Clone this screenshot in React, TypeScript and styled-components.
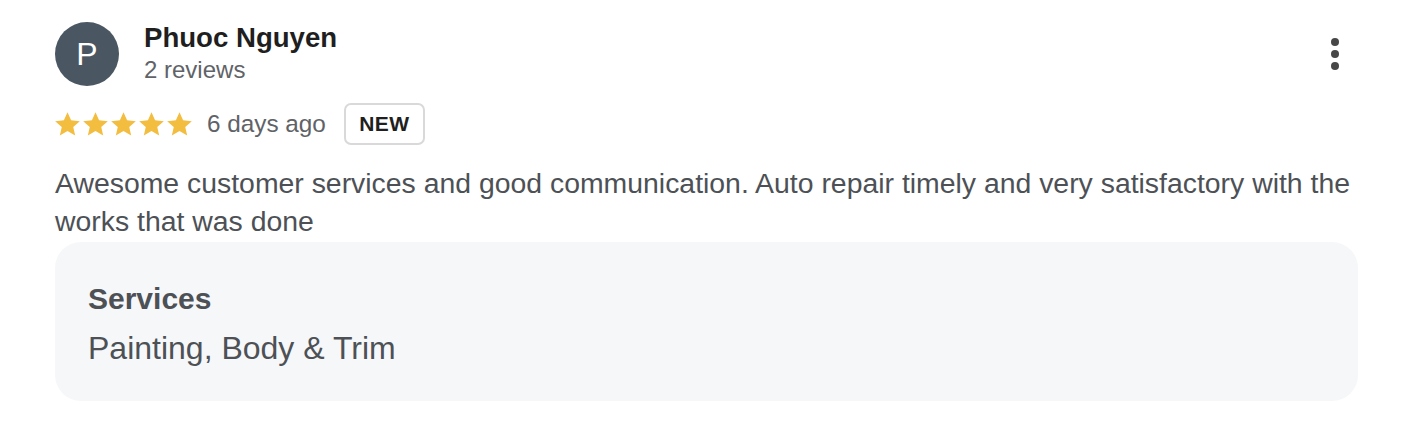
import { createGlobalStyle } from 'styled-components';
import styled from 'styled-components';

type IReview = {
  author: string;
  reviews: number;
  rating: number;
  when: string;
  isNew: boolean;
  text: string;
  services: string;
};

const review: IReview = {
  author: 'Phuoc Nguyen',
  reviews: 2,
  rating: 5,
  when: '6 days ago',
  isNew: true,
  text: 'Awesome customer services and good communication. Auto repair timely and very satisfactory with the works that was done',
  services: 'Painting, Body & Trim',
};

const Star = () => (
  <svg width="27" height="27" viewBox="0 0 24 24">
    <path
      fill="#f3bd3f"
      d="M12 1.2l3.2 7.1 7.75.75-5.85 5.15 1.72 7.6L12 17.8l-6.82 4 1.72-7.6L1.05 9.05l7.75-.75z"
    />
  </svg>
);

export default function App() {
  return (
    <>
      <GlobalStyle />
      <Card>
        <Header>
          <Avatar>{review.author[0]}</Avatar>
          <Author>
            <AuthorName>{review.author}</AuthorName>
            <AuthorMeta>{review.reviews} reviews</AuthorMeta>
          </Author>
          <MenuButton aria-label="More">
            <Dot />
            <Dot />
            <Dot />
          </MenuButton>
        </Header>
        <RatingRow>
          <Stars>
            {Array.from({ length: review.rating }).map((_, i) => (
              <Star key={i} />
            ))}
          </Stars>
          <When>{review.when}</When>
          {review.isNew && <NewBadge>NEW</NewBadge>}
        </RatingRow>
        <Body>{review.text}</Body>
        <ServicesBox>
          <ServicesTitle>Services</ServicesTitle>
          <ServicesList>{review.services}</ServicesList>
        </ServicesBox>
      </Card>
    </>
  );
}

const GlobalStyle = createGlobalStyle`
  body {
    margin: 0;
    background: #ffffff;
    font-family: 'Liberation Sans', Arial, sans-serif;
  }
`;

const Card = styled.div`
  width: 1303px;
  padding: 22px 0 0 55px;
  display: flex;
  flex-direction: column;
`;

const Header = styled.div`
  display: flex;
  align-items: flex-start;
`;

const Avatar = styled.div`
  width: 64px;
  height: 64px;
  border-radius: 50%;
  background: #4a5661;
  color: #ffffff;
  font-size: 32px;
  display: flex;
  align-items: center;
  justify-content: center;
  flex-shrink: 0;
`;

const Author = styled.div`
  margin-left: 25px;
  display: flex;
  flex-direction: column;
  flex: 1;
`;

const AuthorName = styled.span`
  font-size: 27.6px;
  font-weight: 700;
  line-height: 32px;
  color: #1f1f1f;
`;

const AuthorMeta = styled.span`
  font-size: 24px;
  line-height: 32px;
  color: #5f6368;
`;

const MenuButton = styled.button`
  width: 40px;
  height: 48px;
  margin: 8px 3px 0 0;
  border: none;
  background: none;
  padding: 0;
  display: flex;
  flex-direction: column;
  align-items: center;
  justify-content: center;
  gap: 4px;
`;

const Dot = styled.span`
  width: 8px;
  height: 8px;
  border-radius: 50%;
  background: #474747;
`;

const RatingRow = styled.div`
  margin-top: 17px;
  height: 42px;
  display: flex;
  align-items: center;
`;

const Stars = styled.div`
  display: flex;
  gap: 1px;
  margin-left: -1px;
`;

const When = styled.span`
  margin-left: 14px;
  font-size: 24.3px;
  color: #5f6368;
`;

const NewBadge = styled.span`
  margin-left: 18px;
  box-sizing: border-box;
  width: 81px;
  height: 42px;
  border: 2px solid #d9d9d9;
  border-radius: 7px;
  display: flex;
  align-items: center;
  justify-content: center;
  font-size: 21px;
  font-weight: 700;
  letter-spacing: 0.5px;
  color: #1f1f1f;
`;

const Body = styled.p`
  margin: 19px 0 0;
  font-size: 28.4px;
  line-height: 38px;
  color: #4d5156;
`;

const ServicesBox = styled.div`
  margin-top: 2px;
  height: 159px;
  box-sizing: border-box;
  padding: 39px 33px 0;
  border-radius: 26px;
  background: #f6f7f9;
  display: flex;
  flex-direction: column;
  gap: 12px;
`;

const ServicesTitle = styled.span`
  font-size: 30px;
  font-weight: 700;
  line-height: 36px;
  color: #4d5156;
`;

const ServicesList = styled.span`
  font-size: 32px;
  line-height: 38px;
  color: #4d5156;
`;
